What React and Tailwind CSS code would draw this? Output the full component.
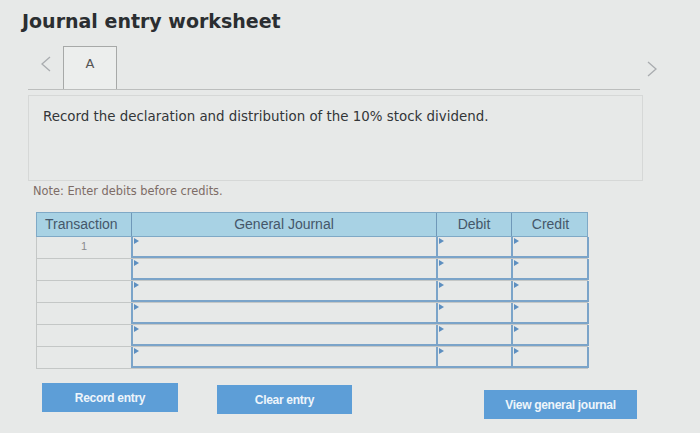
import React from "react";

const rows = [1, 2, 3, 4, 5, 6];

function Marker() {
  return (
    <span className="absolute left-[1px] top-[1px] h-0 w-0 border-y-[3px] border-l-[5px] border-y-transparent border-l-[#5d8fc0]" />
  );
}

function Chevron({ dir }) {
  return (
    <svg width="12" height="16" viewBox="0 0 12 16" className="text-[#a9acaf]">
      <polyline
        points={dir === "left" ? "10,1 2,8 10,15" : "2,1 10,8 2,15"}
        fill="none"
        stroke="currentColor"
        strokeWidth="1.3"
      />
    </svg>
  );
}

export default function App() {
  return (
    <div className="h-[433px] w-[700px] overflow-hidden bg-[#e7e9e8] font-['DejaVu_Sans',sans-serif]">
      <h1 className="pl-[22px] pt-[9px] text-[19px] font-bold leading-[24px] text-[#2b2e31]">
        Journal entry worksheet
      </h1>

      <div className="mt-[14px] flex items-start">
        <div className="ml-[28px] flex h-[43px] w-[612px] items-end border-b border-[#bcbebd]">
          <div className="flex h-[43px] w-[35px] items-center justify-center pb-[8px]">
            <Chevron dir="left" />
          </div>
          <div className="flex h-[43px] w-[54px] items-center justify-center border border-b-0 border-[#a7a9a8] bg-[#eceeed] pb-[8px] text-[13px] text-[#555]">
            A
          </div>
        </div>
        <div className="ml-[6px] mt-[14px]">
          <Chevron dir="right" />
        </div>
      </div>

      <div className="ml-[28px] mt-[5px] h-[86px] w-[615px] border border-[#d6d8d7] pl-[14px] pt-[11px] text-[13.4px] text-[#333638]">
        Record the declaration and distribution of the 10% stock dividend.
      </div>

      <div className="ml-[33px] mt-[2px] text-[11.4px] text-[#7d6c66]">
        Note: Enter debits before credits.
      </div>

      <div className="ml-[36px] mt-[12px] w-[552px] font-['Liberation_Sans',sans-serif]">
        <div className="grid h-[25px] grid-cols-[94px_305px_75px_78px] border border-[#7fa9c6] bg-[#a8d2e4] text-[14px] text-[#45576a]">
          <div className="flex items-center px-[8px]">Transaction</div>
          <div className="flex items-center justify-center border-l border-[#6f98b8]">
            General Journal
          </div>
          <div className="flex items-center justify-center border-l border-[#6f98b8]">
            Debit
          </div>
          <div className="flex items-center justify-center border-l border-[#6f98b8]">
            Credit
          </div>
        </div>
        {rows.map((r) => (
          <div
            key={r}
            className="grid h-[22px] grid-cols-[94px_305px_75px_78px] border-x border-b border-[#c4c7c6]"
          >
            <div className="flex justify-center pt-[1px] text-[11px] text-[#8a8c8e]">
              {r === 1 ? "1" : ""}
            </div>
            <div className="relative border-x-2 border-b-2 border-[#7ba4c9] border-r-0">
              <Marker />
            </div>
            <div className="relative border-x-2 border-b-2 border-[#7ba4c9] border-r-0">
              <Marker />
            </div>
            <div className="relative border-x-2 border-b-2 border-[#7ba4c9]">
              <Marker />
            </div>
          </div>
        ))}
      </div>

      <div className="mt-[14px] flex items-start font-['Liberation_Sans',sans-serif] text-[12px] font-bold tracking-[-0.3px] text-[#eef5fb]">
        <button className="ml-[42px] h-[29px] w-[136px] bg-[#5d9ed7]">Record entry</button>
        <button className="ml-[39px] mt-[2px] h-[29px] w-[135px] bg-[#5d9ed7]">Clear entry</button>
        <button className="ml-[132px] mt-[7px] h-[29px] w-[153px] bg-[#5d9ed7]">
          View general journal
        </button>
      </div>
    </div>
  );
}
